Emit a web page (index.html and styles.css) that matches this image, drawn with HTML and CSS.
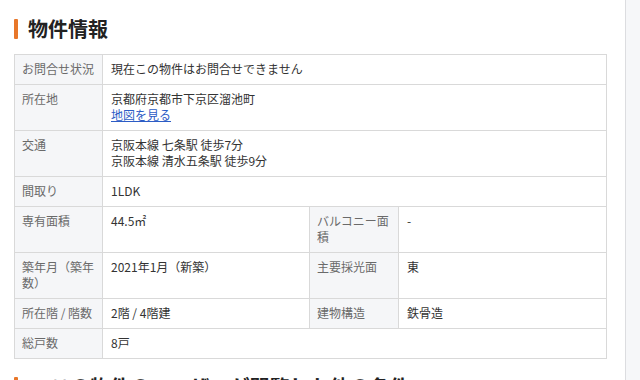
FILE: index.html
```html
<!DOCTYPE html>
<html lang="ja">
<head>
<meta charset="utf-8">
<title>物件情報</title>
<link rel="stylesheet" href="styles.css">
</head>
<body>
<div class="page">
  <main class="main">
    <h2 class="heading"><span class="bar"></span>物件情報</h2>
    <table class="info">
      <colgroup>
        <col class="c-label"><col class="c-value"><col class="c-label2"><col class="c-value2">
      </colgroup>
      <tr><th>お問合せ状況</th><td colspan="3">現在この物件はお問合せできません</td></tr>
      <tr><th>所在地</th><td colspan="3">京都府京都市下京区溜池町<br><a href="#" class="link">地図を見る</a></td></tr>
      <tr><th>交通</th><td colspan="3">京阪本線 七条駅 徒歩7分<br>京阪本線 清水五条駅 徒歩9分</td></tr>
      <tr><th>間取り</th><td colspan="3">1LDK</td></tr>
      <tr><th>専有面積</th><td>44.5㎡</td><th>バルコニー面積</th><td>-</td></tr>
      <tr><th>築年月（築年数）</th><td>2021年1月（新築）</td><th>主要採光面</th><td>東</td></tr>
      <tr><th>所在階 / 階数</th><td>2階 / 4階建</td><th>建物構造</th><td>鉄骨造</td></tr>
      <tr><th>総戸数</th><td colspan="3">8戸</td></tr>
    </table>
    <h2 class="heading heading-next"><span class="bar"></span><span class="next-text">この物件のユーザーが閲覧した他の条件</span></h2>
  </main>
  <aside class="side"></aside>
</div>
</body>
</html>
```

FILE: styles.css
```css
html, body {
  margin: 0;
  padding: 0;
  background: #fff;
  overflow: hidden;
}
body {
  font-family: "Noto Sans CJK JP", "Noto Sans", sans-serif;
  font-size: 12px;
  color: #333;
}
.page {
  display: flex;
  height: 380px;
}
.main {
  flex: 0 0 625px;
  padding: 19px 0 0 14px;
  box-sizing: border-box;
}
.side {
  flex: 1;
  border-left: 1px solid #dcdde0;
  background: #f6f7f9;
}
.heading {
  display: flex;
  align-items: center;
  gap: 10px;
  margin: 0 0 15px;
  height: 20px;
  font-size: 20px;
  line-height: 20px;
  font-weight: bold;
  color: #222;
}
.bar {
  width: 4px;
  height: 20px;
  background: #e8772a;
  border-radius: 1px;
  flex: none;
}
.heading-next {
  margin-top: 18px;
}
.next-text {
  margin-left: 22px;
}
.info {
  border-collapse: collapse;
  table-layout: fixed;
  width: 592px;
  line-height: 16px;
}
.c-label { width: 88px; }
.c-value { width: 207px; }
.c-label2 { width: 89px; }
.c-value2 { width: 208px; }
.info th, .info td {
  border: 1px solid #d9d9d9;
  padding: 6px 7px 7px;
  vertical-align: top;
  text-align: left;
}
.info th {
  background: #f5f6f8;
  color: #6a6a6a;
  font-weight: normal;
}
.info td {
  color: #333;
  padding-left: 8px;
}
.link {
  color: #2c5cc5;
  text-decoration: underline;
}
```
